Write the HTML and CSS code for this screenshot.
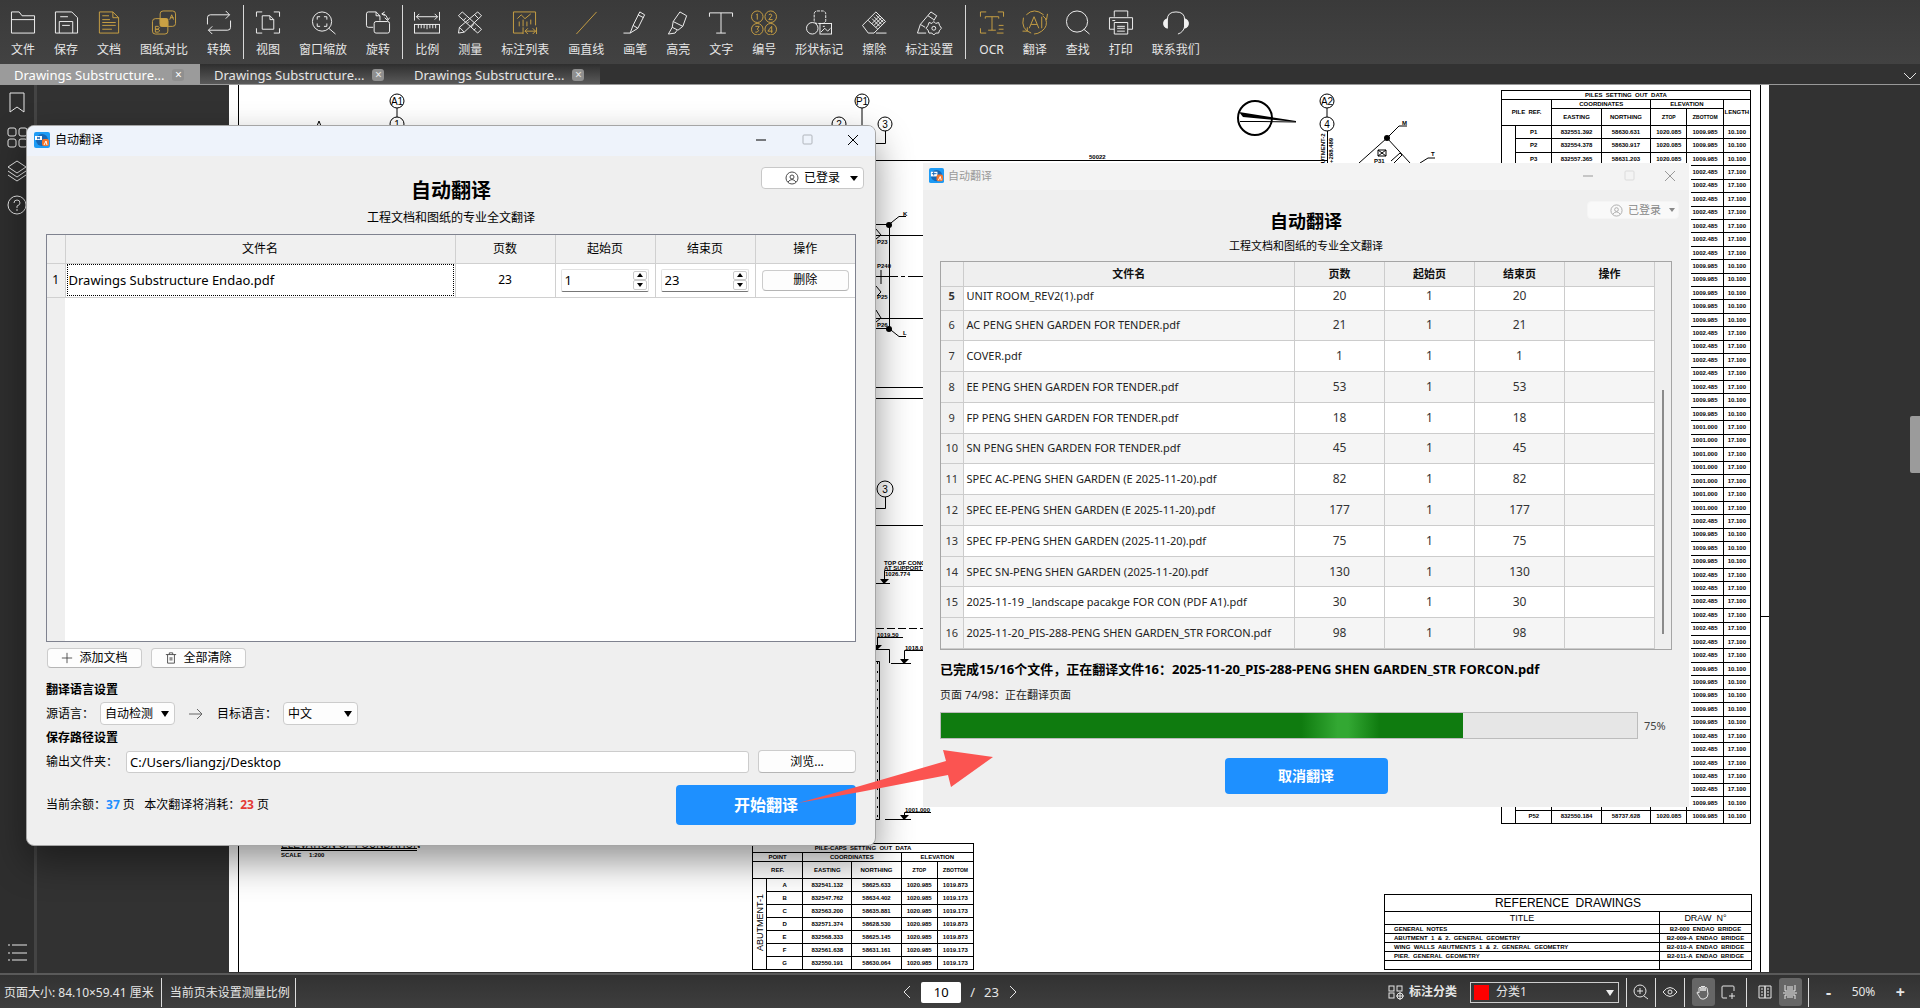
FILE: index.html
```html
<!DOCTYPE html>
<html lang="zh-CN">
<head>
<meta charset="utf-8">
<title>自动翻译</title>
<link rel="stylesheet" href="styles.css">
</head>
<body>
<header class="toolbar">
  <div class="tool-group">
    <button class="tool"><svg viewBox="0 0 28 26"><path d="M2 24V2h8l3 4h13v18zM2 10h24"/></svg><span>文件</span></button>
    <button class="tool"><svg viewBox="0 0 28 26"><path d="M3 2h17l6 6v16H3zM7 24V12h14v12M8 7h8M10 16h8"/></svg><span>保存</span></button>
    <button class="tool gold"><svg viewBox="0 0 28 26"><path d="M4 2h14l6 6v16H4zM18 2v6h6M7 6h7M7 10h8M7 13h14M7 16h14M7 20h10"/></svg><span>文档</span></button>
    <button class="tool gold"><svg viewBox="0 0 28 26"><rect x="10" y="1" width="16" height="16" rx="3"/><rect x="2" y="9" width="16" height="16" rx="3"/><rect class="solid" x="10" y="9" width="8" height="8" rx="1"/><path d="M20 10l2-5 2 5M21 8h3M5 17h3q2 1 0 3H5zM5 20h3q3 2 0 3H5z"/></svg><span>图纸对比</span></button>
    <button class="tool"><svg viewBox="0 0 28 26"><path d="M2 15V8q0-3 3-3h20M21 1l4 4-4 4M26 11v7q0 3-3 3H3M7 17l-4 4 4 4"/></svg><span>转换</span></button>
  </div>
  <div class="tool-group">
    <button class="tool"><svg viewBox="0 0 28 26"><path d="M2 7V2h6M20 2h6v5M26 19v5h-6M8 24H2v-5M8 6h8l4 4v10H8zM16 6v4h4"/></svg><span>视图</span></button>
    <button class="tool"><svg viewBox="0 0 28 26"><circle cx="13" cy="12" r="10"/><path d="M20 19l7 6M8 10V7h3M15 7h3v3M18 14v3h-3M11 17H8v-3"/></svg><span>窗口缩放</span></button>
    <button class="tool"><svg viewBox="0 0 28 26"><path d="M9 18H4q-2 0-2-2V4q0-2 2-2h8l4 4v5M12 2v4h4"/><rect x="10" y="12" width="16" height="12" rx="2"/><path d="M18 4q5 0 6 6M21 8l3 3 2-3M18 4l3-2M18 4l3 2"/></svg><span>旋转</span></button>
  </div>
  <div class="tool-group">
    <button class="tool"><svg viewBox="0 0 28 26"><path d="M1 2v9M27 2v9M3 7h22M6 4L3 7l3 3M22 4l3 3-3 3"/><rect x="1" y="15" width="26" height="9"/><path d="M5 15v4M8 15v4M11 15v4M14 15v5M17 15v4M20 15v4M23 15v4"/></svg><span>比例</span></button>
    <button class="tool"><svg viewBox="0 0 28 26"><path d="M2 6l4-4 20 18-4 4zM7 11l3-3M11 14l2-2M15 18l3-3M18 21l2-2M22 2l4 4L8 23l-6 1 1-6zM19 5l4 4M3 18l5 5"/></svg><span>测量</span></button>
    <button class="tool gold"><svg viewBox="0 0 28 26"><path d="M12 24H2V2h23v14M6 9l4-4 4 4 6-5M8 12v5M12 10v7M16 12v5M20 10v5M12 18v7M26 18v7M14 22h11M17 19l-3 3 3 3M22 19l3 3-3 3"/></svg><span>标注列表</span></button>
    <button class="tool gold"><svg viewBox="0 0 28 26"><path d="M4 25L25 2"/></svg><span>画直线</span></button>
    <button class="tool"><svg viewBox="0 0 28 26"><path d="M2 24h7l3-8 7-14 5 3-7 14-8 5M12 16l5 3M17 5l6 3"/></svg><span>画笔</span></button>
    <button class="tool"><svg viewBox="0 0 28 26"><path d="M9 12l7-10 7 4-4 11-5 4-6-3zM9 12l10 5M8 18l-4 7 7-1 2-3"/></svg><span>高亮</span></button>
    <button class="tool"><svg viewBox="0 0 28 26"><path d="M2 7V3h24v4M14 3v21M9 24h10"/></svg><span>文字</span></button>
    <button class="tool gold"><svg viewBox="0 0 28 26"><circle cx="7" cy="7" r="6"/><circle cx="21" cy="7" r="6"/><circle cx="7" cy="20" r="6"/><circle cx="21" cy="20" r="6"/><path d="M6 5l1-1v6M19 5q3-2 3 1l-3 4h4M5 17h4l-2 3q3 1 0 3H5M23 22h-5l4-5v7"/></svg><span>编号</span></button>
    <button class="tool"><svg viewBox="0 0 28 26"><rect x="9" y="1" width="12" height="13" rx="3" stroke-dasharray="3 1"/><circle cx="7" cy="19" r="6"/><rect x="15" y="14" width="12" height="11"/><path d="M16 23l4-4 3 3 3-3M18 17h2"/></svg><span>形状标记</span></button>
    <button class="tool"><svg viewBox="0 0 28 26"><path d="M2 16L16 2l10 10-12 12H8zM8 11l10 9M16 24h11M12 9l8 8M14 7l8 8M16 5l8 8M20 6l-8 8M22 8l-8 8M24 10l-8 8"/></svg><span>擦除</span></button>
    <button class="tool"><svg viewBox="0 0 28 26"><path d="M11 24H2l3-9L16 2l6 4-3 5M13 6l6 4M5 15l5 3"/><circle cx="19" cy="19" r="2"/><path d="M19 12l2 2 3-1 1 3 2 3-2 2-1 3-3 0-2 2-2-2-3 0-1-3-2-2 2-3 1-3 3 1z"/></svg><span>标注设置</span></button>
  </div>
  <div class="tool-group">
    <button class="tool gold"><svg viewBox="0 0 28 26"><path d="M2 7V2h6M20 2h6v5M8 24H2v-5M7 7h14v2M14 7v14M10 21h8M21 16h5M21 20h5M19 24h7M7 7v2"/></svg><span>OCR</span></button>
    <button class="tool gold"><svg viewBox="0 0 28 26"><path d="M5 5q8-8 18 0M2 8q-3 12 8 16M25 9q3 8-4 13-4 3-8 3M27 4l-1 6-4-4M1 22l5 0 0-4M8 19l5-12 5 12M10 15h6M21 7v12"/></svg><span>翻译</span></button>
    <button class="tool"><svg viewBox="0 0 28 26"><circle cx="13" cy="12" r="11"/><path d="M20 20l6 5"/></svg><span>查找</span></button>
    <button class="tool"><svg viewBox="0 0 28 26"><path d="M7 7V1h14v6M7 20H2V8h24v12h-5M7 13h14v12H7zM10 17h8M10 19h8M10 22h8M5 11h3"/></svg><span>打印</span></button>
    <button class="tool"><svg viewBox="0 0 28 26"><path d="M5 10q0-8 9-8t9 8v7q-1 6-7 8"/><path class="solid" d="M5 9q-4 1-4 5t4 5zM23 9q4 1 4 5t-4 5z"/></svg><span>联系我们</span></button>
  </div>
</header>

<nav class="tabs">
  <a class="tab active" href="#">Drawings Substructure... <i>×</i></a>
  <a class="tab" href="#">Drawings Substructure... <i>×</i></a>
  <a class="tab" href="#">Drawings Substructure... <i>×</i></a>
  <button class="tabs-more" aria-label="more"><svg viewBox="0 0 14 10"><path d="M1 2l6 6 6-6"/></svg></button>
</nav>

<main class="workspace">
  <aside class="rail">
    <svg viewBox="0 0 20 22"><path d="M3 1h14v19l-7-5-7 5z"/></svg>
    <svg viewBox="0 0 20 22"><rect x="1" y="2" width="8" height="8" rx="2"/><rect x="12" y="2" width="8" height="8" rx="2"/><rect x="1" y="13" width="8" height="8" rx="2"/><rect x="12" y="13" width="8" height="8" rx="2"/></svg>
    <svg viewBox="0 0 20 22"><path d="M10 1l9 6-9 6-9-6zM1 11l9 6 9-6M1 15l9 6 9-6"/></svg>
    <svg viewBox="0 0 20 22"><circle cx="10" cy="11" r="9"/><path d="M7 9q0-3 3-3t3 3q0 2-3 3v2M10 15v2"/></svg>
    <svg class="last" viewBox="0 0 20 22"><path d="M5 4h15M5 12h15M5 19h15M1 4h2M1 12h2M1 19h2"/></svg>
  </aside>
  <section class="canvas">
    <div class="sheet">
      <svg class="drawing" viewBox="229 85 1540 887">
        <g class="ln">
          <path d="M238.500 85V972M1760.500 85V972M1760 616.500h9"/>
          <circle cx="397" cy="101" r="7"/><circle cx="397" cy="124" r="7"/><path d="M397 108v9M317 126l2-5 2 5"/>
          <circle cx="862" cy="101" r="7"/><circle cx="839" cy="124" r="7"/><circle cx="885" cy="124" r="7"/><path d="M862 108v18M885.500 131v12.500H876"/>
          <path d="M876 160.500h451"/>
          <circle cx="1327" cy="101" r="7"/><circle cx="1327" cy="124" r="7"/><path d="M1327 108v9M1327.500 131v32"/>
          <path d="M1359 163l28-25 12-12h8M1387 138l23 25M1391 161l9-8 2 2-8 8M1378 150h8v6h-8zM1378 150l8 6M1386 150l-8 6M1420 163l8-5h7"/>
          <path d="M876 224.500h13l10-8h7M889.500 225v104M876 328.500h13l10 8h7M876 235.500h47M876 318.500h47M876 229l5 6-5 4M876 310l5 8-5 4M876 286l5 6-4 4M881 270v14M876 387.500h47M876 398.500h47"/>
          <path stroke-dasharray="22 3 4 3" d="M876 276.500h47"/>
          <circle cx="885" cy="489" r="8"/><path d="M885.500 497v11.500H876M876 525.500h47"/>
          <path d="M923 570.500H884.500V583M876 583.500h14M877 637.500h26M877.500 637v10M876 649.500h13.500V663M923 650.500H904.500V663M891 663.500h20M876 661.500h3.500V819.500H876M931 812.500H904.500V819M885 819.500h26M281 850.500h136M281 848.500h136"/>
          <path stroke-dasharray="8 3" d="M876 628.500h47"/>
          <path stroke-dasharray="2 7" d="M877.500 662v156"/>
        </g>
        <circle class="north" cx="1255" cy="118" r="17"/>
        <path class="ln" d="M1240 121.500h20l36 .5"/>
        <path d="M1239 112l57 9v1l-53-5z"/>
        <circle cx="1387" cy="138" r="3"/><circle cx="889" cy="225" r="3"/><circle cx="889" cy="329" r="3"/>
        <path d="M880 579h9l-5 5zM873 645h9l-5 5zM900 659h9l-5 5zM900 815h9l-5 5z"/>
        <g class="mark">
          <text x="397" y="105">A1</text><text x="397" y="128">1</text><text x="862" y="105">P1</text><text x="839" y="128">2</text><text x="885" y="128">3</text><text x="1327" y="105">A2</text><text x="1327" y="128">4</text><text x="885" y="493">3</text>
        </g>
        <g class="note">
          <text x="1089" y="159">50022</text><text x="1402" y="125">M</text><text x="1431" y="156">T</text><text x="903" y="216">K</text><text x="903" y="335">L</text><text x="1374" y="163">P31</text>
          <text x="877" y="244">P23</text><text x="877" y="268">P240</text><text x="877" y="299">P25</text><text x="877" y="327">P26</text>
          <text x="884" y="565">TOP OF CONC</text><text x="884" y="570">AT SUPPORT</text><text x="885" y="576">1026.774</text>
          <text x="877" y="637">1019.50</text><text x="905" y="650">1018.0</text><text x="905" y="812">1001.000</text>
          <text x="281" y="857">SCALE</text><text x="309" y="857">1:200</text>
          <text transform="rotate(-90 1325 172)" x="1325" y="172">ABUTMENT-2</text><text transform="rotate(-90 1333 163)" x="1333" y="163">+288.489</text>
        </g>
        <text class="caption" x="281" y="848">ELEVATION OF FOUNDATION</text>
      </svg>

      <table class="cad piles">
        <colgroup><col class="c14"><col class="c36"><col class="c49"><col class="c49"><col class="c36"><col class="c36"><col class="c27"></colgroup>
        <thead>
          <tr class="h9"><th colspan="7">PILES &nbsp;SETTING &nbsp;OUT &nbsp;DATA</th></tr>
          <tr class="h9"><th colspan="2" rowspan="2">PILE &nbsp;REF.</th><th colspan="2">COORDINATES</th><th colspan="2">ELEVATION</th><th rowspan="2">LENGTH</th></tr>
          <tr class="h17"><th>EASTING</th><th>NORTHING</th><th>Z<small>TOP</small></th><th>Z<small>BOTTOM</small></th></tr>
        </thead>
        <tbody>
          <tr><td rowspan="52"></td><td>P1</td><td>832551.392</td><td>58630.631</td><td>1020.085</td><td>1009.985</td><td>10.100</td></tr>
          <tr><td>P2</td><td>832554.378</td><td>58630.917</td><td>1020.085</td><td>1009.985</td><td>10.100</td></tr>
          <tr><td>P3</td><td>832557.365</td><td>58631.203</td><td>1020.085</td><td>1009.985</td><td>10.100</td></tr>
          <tr><td colspan="4"></td><td>1002.485</td><td>17.100</td></tr>
          <tr><td colspan="4"></td><td>1002.485</td><td>17.100</td></tr>
          <tr><td colspan="4"></td><td>1002.485</td><td>17.100</td></tr>
          <tr><td colspan="4"></td><td>1002.485</td><td>17.100</td></tr>
          <tr><td colspan="4"></td><td>1002.485</td><td>17.100</td></tr>
          <tr><td colspan="4"></td><td>1002.485</td><td>17.100</td></tr>
          <tr><td colspan="4"></td><td>1002.485</td><td>17.100</td></tr>
          <tr><td colspan="4"></td><td>1009.985</td><td>10.100</td></tr>
          <tr><td colspan="4"></td><td>1009.985</td><td>10.100</td></tr>
          <tr><td colspan="4"></td><td>1009.985</td><td>10.100</td></tr>
          <tr><td colspan="4"></td><td>1009.985</td><td>10.100</td></tr>
          <tr><td colspan="4"></td><td>1009.985</td><td>10.100</td></tr>
          <tr><td colspan="4"></td><td>1002.485</td><td>17.100</td></tr>
          <tr><td colspan="4"></td><td>1002.485</td><td>17.100</td></tr>
          <tr><td colspan="4"></td><td>1002.485</td><td>17.100</td></tr>
          <tr><td colspan="4"></td><td>1002.485</td><td>17.100</td></tr>
          <tr><td colspan="4"></td><td>1002.485</td><td>17.100</td></tr>
          <tr><td colspan="4"></td><td>1009.985</td><td>10.100</td></tr>
          <tr><td colspan="4"></td><td>1009.985</td><td>10.100</td></tr>
          <tr><td colspan="4"></td><td>1001.000</td><td>17.100</td></tr>
          <tr><td colspan="4"></td><td>1001.000</td><td>17.100</td></tr>
          <tr><td colspan="4"></td><td>1001.000</td><td>17.100</td></tr>
          <tr><td colspan="4"></td><td>1001.000</td><td>17.100</td></tr>
          <tr><td colspan="4"></td><td>1001.000</td><td>17.100</td></tr>
          <tr><td colspan="4"></td><td>1001.000</td><td>17.100</td></tr>
          <tr><td colspan="4"></td><td>1001.000</td><td>17.100</td></tr>
          <tr><td colspan="4"></td><td>1002.485</td><td>17.100</td></tr>
          <tr><td colspan="4"></td><td>1009.985</td><td>10.100</td></tr>
          <tr><td colspan="4"></td><td>1009.985</td><td>10.100</td></tr>
          <tr><td colspan="4"></td><td>1009.985</td><td>10.100</td></tr>
          <tr><td colspan="4"></td><td>1002.485</td><td>17.100</td></tr>
          <tr><td colspan="4"></td><td>1002.485</td><td>17.100</td></tr>
          <tr><td colspan="4"></td><td>1002.485</td><td>17.100</td></tr>
          <tr><td colspan="4"></td><td>1002.485</td><td>17.100</td></tr>
          <tr><td colspan="4"></td><td>1002.485</td><td>17.100</td></tr>
          <tr><td colspan="4"></td><td>1002.485</td><td>17.100</td></tr>
          <tr><td colspan="4"></td><td>1002.485</td><td>17.100</td></tr>
          <tr><td colspan="4"></td><td>1009.985</td><td>10.100</td></tr>
          <tr><td colspan="4"></td><td>1009.985</td><td>10.100</td></tr>
          <tr><td colspan="4"></td><td>1009.985</td><td>10.100</td></tr>
          <tr><td colspan="4"></td><td>1009.985</td><td>10.100</td></tr>
          <tr><td colspan="4"></td><td>1009.985</td><td>10.100</td></tr>
          <tr><td colspan="4"></td><td>1002.485</td><td>17.100</td></tr>
          <tr><td colspan="4"></td><td>1002.485</td><td>17.100</td></tr>
          <tr><td colspan="4"></td><td>1002.485</td><td>17.100</td></tr>
          <tr><td colspan="4"></td><td>1002.485</td><td>17.100</td></tr>
          <tr><td colspan="4"></td><td>1002.485</td><td>17.100</td></tr>
          <tr><td></td><td></td><td></td><td></td><td>1009.985</td><td>10.100</td></tr>
          <tr><td>P52</td><td>832550.184</td><td>58737.628</td><td>1020.085</td><td>1009.985</td><td>10.100</td></tr>
        </tbody>
      </table>

      <table class="cad caps">
        <colgroup><col class="c14"><col class="c36"><col class="c49"><col class="c49"><col class="c36"><col class="c36"></colgroup>
        <thead>
          <tr class="h9"><th colspan="6">PILE-CAPS &nbsp;SETTING &nbsp;OUT &nbsp;DATA</th></tr>
          <tr class="h9"><th colspan="2">POINT</th><th colspan="2">COORDINATES</th><th colspan="2">ELEVATION</th></tr>
          <tr class="h17"><th colspan="2">REF.</th><th>EASTING</th><th>NORTHING</th><th>Z<small>TOP</small></th><th>Z<small>BOTTOM</small></th></tr>
        </thead>
        <tbody>
          <tr><th rowspan="7" class="side"><span>ABUTMENT-1</span></th><td>A</td><td>832541.132</td><td>58625.633</td><td>1020.985</td><td>1019.873</td></tr>
          <tr><td>B</td><td>832547.762</td><td>58634.402</td><td>1020.985</td><td>1019.173</td></tr>
          <tr><td>C</td><td>832563.200</td><td>58635.881</td><td>1020.985</td><td>1019.173</td></tr>
          <tr><td>D</td><td>832571.374</td><td>58628.530</td><td>1020.985</td><td>1019.873</td></tr>
          <tr><td>E</td><td>832568.333</td><td>58625.145</td><td>1020.985</td><td>1019.873</td></tr>
          <tr><td>F</td><td>832561.638</td><td>58631.161</td><td>1020.985</td><td>1019.173</td></tr>
          <tr><td>G</td><td>832550.191</td><td>58630.064</td><td>1020.985</td><td>1019.173</td></tr>
        </tbody>
      </table>

      <table class="cad refs">
        <colgroup><col class="c275"><col class="c92"></colgroup>
        <thead>
          <tr class="h17"><th colspan="2" class="big">REFERENCE &nbsp;DRAWINGS</th></tr>
          <tr class="h13"><th class="mid">TITLE</th><th class="mid">DRAW &nbsp;N°</th></tr>
        </thead>
        <tbody>
          <tr><td>GENERAL &nbsp;NOTES</td><td>B2-000 &nbsp;ENDAO &nbsp;BRIDGE</td></tr>
          <tr><td>ABUTMENT &nbsp;1 &nbsp;&amp; &nbsp;2. &nbsp;GENERAL &nbsp;GEOMETRY</td><td>B2-009-A &nbsp;ENDAO &nbsp;BRIDGE</td></tr>
          <tr><td>WING &nbsp;WALLS &nbsp;ABUTMENTS &nbsp;1 &nbsp;&amp; &nbsp;2. &nbsp;GENERAL &nbsp;GEOMETRY</td><td>B2-010-A &nbsp;ENDAO &nbsp;BRIDGE</td></tr>
          <tr><td>PIER. &nbsp;GENERAL &nbsp;GEOMETRY</td><td>B2-011-A &nbsp;ENDAO &nbsp;BRIDGE</td></tr>
          <tr><td></td><td></td></tr>
        </tbody>
      </table>
    </div>
    <div class="scroll-thumb"></div>
  </section>

  <section class="win progress-win">
    <div class="titlebar">
      <svg class="logo" viewBox="0 0 16 16"><rect width="16" height="16" rx="2" fill="#1d9bf5"/><circle cx="8" cy="8" r="6" fill="#1767b5"/><path d="M2 4h7v5H2z" fill="#fff"/><path d="M3 6h5M5 4v4" stroke="#1767b5"/><rect x="8" y="7" width="7" height="7" rx="2" fill="#f4762d"/><path d="M10 13l2-4 1 4" stroke="#fff" fill="none"/></svg>
      <span>自动翻译</span>
      <div class="winctl"><svg viewBox="0 0 12 12"><path d="M1 6h10"/></svg><svg class="off" viewBox="0 0 12 12"><rect x="2" y="1" width="9" height="9" rx="1"/></svg><svg viewBox="0 0 12 12"><path d="M1 1l10 10M11 1L1 11"/></svg></div>
    </div>
    <div class="win-head">
      <div class="headline"><h2>自动翻译</h2><p>工程文档和图纸的专业全文翻译</p></div>
      <button class="login" disabled><svg viewBox="0 0 14 14"><circle cx="7" cy="7" r="6"/><circle cx="7" cy="6" r="2"/><path d="M3 11q4-5 8 0"/></svg>已登录<b class="caret"></b></button>
    </div>
    <div class="win-body">
      <div class="queue-frame">
        <table class="queue">
          <colgroup><col class="qn"><col><col class="qc"><col class="qc"><col class="qc"><col class="qc"></colgroup>
          <thead><tr><th></th><th>文件名</th><th>页数</th><th>起始页</th><th>结束页</th><th>操作</th></tr></thead>
          <tbody>
            <tr class="cut"><th>5</th><td>UNIT ROOM_REV2(1).pdf</td><td>20</td><td>1</td><td>20</td><td></td></tr>
            <tr><th>6</th><td>AC PENG SHEN GARDEN FOR TENDER.pdf</td><td>21</td><td>1</td><td>21</td><td></td></tr>
            <tr><th>7</th><td>COVER.pdf</td><td>1</td><td>1</td><td>1</td><td></td></tr>
            <tr><th>8</th><td>EE PENG SHEN GARDEN FOR TENDER.pdf</td><td>53</td><td>1</td><td>53</td><td></td></tr>
            <tr><th>9</th><td>FP PENG SHEN GARDEN FOR TENDER.pdf</td><td>18</td><td>1</td><td>18</td><td></td></tr>
            <tr><th>10</th><td>SN PENG SHEN GARDEN FOR TENDER.pdf</td><td>45</td><td>1</td><td>45</td><td></td></tr>
            <tr><th>11</th><td>SPEC AC-PENG SHEN GARDEN (E 2025-11-20).pdf</td><td>82</td><td>1</td><td>82</td><td></td></tr>
            <tr><th>12</th><td>SPEC EE-PENG SHEN GARDEN (E 2025-11-20).pdf</td><td>177</td><td>1</td><td>177</td><td></td></tr>
            <tr><th>13</th><td>SPEC FP-PENG SHEN GARDEN (2025-11-20).pdf</td><td>75</td><td>1</td><td>75</td><td></td></tr>
            <tr><th>14</th><td>SPEC SN-PENG SHEN GARDEN (2025-11-20).pdf</td><td>130</td><td>1</td><td>130</td><td></td></tr>
            <tr><th>15</th><td>2025-11-19 _landscape pacakge FOR CON (PDF A1).pdf</td><td>30</td><td>1</td><td>30</td><td></td></tr>
            <tr><th>16</th><td>2025-11-20_PIS-288-PENG SHEN GARDEN_STR FORCON.pdf</td><td>98</td><td>1</td><td>98</td><td></td></tr>
          </tbody>
        </table>
        <div class="queue-scroll"><i></i></div>
      </div>
      <p class="status">已完成15/16个文件，正在翻译文件16：2025-11-20_PIS-288-PENG SHEN GARDEN_STR FORCON.pdf</p>
      <label class="substatus" for="prog">页面 74/98：正在翻译页面</label>
      <div class="meter"><progress id="prog" value="75" max="100"></progress><span>75%</span></div>
      <button class="primary small">取消翻译</button>
    </div>
  </section>

  <section class="win main-win">
    <div class="titlebar">
      <svg class="logo" viewBox="0 0 16 16"><rect width="16" height="16" rx="2" fill="#1d9bf5"/><circle cx="8" cy="8" r="6" fill="#1767b5"/><path d="M1 4h7v4H1z" fill="#fff"/><path d="M3 5l3 2M6 5L3 7" stroke="#1767b5"/><rect x="8" y="7" width="7" height="7" rx="2" fill="#f4762d"/><path d="M10 13l2-4 1 4" stroke="#fff" fill="none"/></svg>
      <span>自动翻译</span>
      <div class="winctl"><svg viewBox="0 0 12 12"><path d="M1 6h10"/></svg><svg class="off" viewBox="0 0 12 12"><rect x="2" y="1" width="9" height="9" rx="1"/></svg><svg viewBox="0 0 12 12"><path d="M1 1l10 10M11 1L1 11"/></svg></div>
    </div>
    <div class="win-head">
      <div class="headline"><h1>自动翻译</h1><p>工程文档和图纸的专业全文翻译</p></div>
      <button class="login"><svg viewBox="0 0 14 14"><circle cx="7" cy="7" r="6"/><circle cx="7" cy="6" r="2"/><path d="M3 11q4-5 8 0"/></svg>已登录<b class="caret"></b></button>
    </div>
    <div class="win-body">
      <div class="files-frame">
        <table class="files">
          <colgroup><col class="fn"><col><col class="fc"><col class="fc"><col class="fc"><col class="fc"></colgroup>
          <thead><tr><th></th><th>文件名</th><th>页数</th><th>起始页</th><th>结束页</th><th>操作</th></tr></thead>
          <tbody><tr>
            <th>1</th><td class="name"><div>Drawings Substructure Endao.pdf</div></td><td>23</td>
            <td><div class="spin"><input type="number" value="1" aria-label="起始页"><span><button aria-label="+"></button><button class="down" aria-label="-"></button></span></div></td>
            <td><div class="spin"><input type="number" value="23" aria-label="结束页"><span><button aria-label="+"></button><button class="down" aria-label="-"></button></span></div></td>
            <td><button class="btn del">删除</button></td>
          </tr></tbody>
        </table>
      </div>
      <div class="row actions">
        <button class="btn"><svg viewBox="0 0 14 14"><path d="M7 1v12M1 7h12"/></svg>添加文档</button>
        <button class="btn"><svg viewBox="0 0 14 14"><path d="M1 3h12M5 3V1h4v2M3 3v10h8V3M6 6v4M8 6v4"/></svg>全部清除</button>
      </div>
      <h3>翻译语言设置</h3>
      <div class="row langs">
        <label for="src">源语言：</label>
        <select id="src"><option>自动检测</option></select>
        <svg class="to" viewBox="0 0 14 12"><path d="M0 6h13M8 1l5 5-5 5"/></svg>
        <label for="dst">目标语言：</label>
        <select id="dst"><option>中文</option></select>
      </div>
      <h3>保存路径设置</h3>
      <div class="row path">
        <label for="out">输出文件夹：</label>
        <input id="out" type="text" value="C:/Users/liangzj/Desktop">
        <button class="btn">浏览...</button>
      </div>
      <div class="footer">
        <p>当前余额：<b class="blue">37</b> 页 &nbsp; 本次翻译将消耗：<b class="red">23</b> 页</p>
        <button class="primary">开始翻译</button>
      </div>
    </div>
  </section>

  <svg class="pointer" viewBox="0 0 196 54"><path d="M0 53L62 36 148 11l-3-11 50 7-42 30-3-12-88 17z"/></svg>
</main>

<footer class="statusbar">
  <div class="info"><span>页面大小: 84.10×59.41 厘米</span><span>当前页未设置测量比例</span></div>
  <div class="pager">
    <button aria-label="prev"><svg viewBox="0 0 10 14"><path d="M8 1L2 7l6 6"/></svg></button>
    <input type="text" value="10" aria-label="page"><span>/</span><span>23</span>
    <button aria-label="next"><svg viewBox="0 0 10 14"><path d="M2 1l6 6-6 6"/></svg></button>
  </div>
  <div class="view">
    <svg viewBox="0 0 16 16"><rect x="1" y="2" width="5" height="5"/><rect x="9" y="2" width="5" height="5"/><rect x="1" y="9" width="5" height="5"/><circle cx="12" cy="12" r="3"/><path d="M12 8v8M8 12h8"/></svg>
    <label for="cat">标注分类</label>
    <div class="cat"><select id="cat"><option>分类1</option></select></div>
    <div class="cell"><button aria-label="zoom"><svg viewBox="0 0 16 16"><circle cx="7" cy="7" r="6"/><path d="M11 12l4 3M4 7h6M7 4v6"/></svg></button></div>
    <div class="cell"><button aria-label="show"><svg viewBox="0 0 16 16"><path d="M1 8q7-9 14 0-7 9-14 0z"/><circle cx="8" cy="8" r="2"/></svg></button></div>
    <div class="cell wide"><button class="on" aria-label="pan"><svg viewBox="0 0 16 16"><path d="M4 9V4q1-2 2 0v3-4q1-2 2 0v4-4q1-2 2 0v4-3q2-1 2 0l1 6q0 4-4 5H7q-2 0-3-3L2 9q0-2 2 0z"/></svg></button><button aria-label="select"><svg viewBox="0 0 16 16"><path d="M7 14H3q-1 0-1-1V3q0-1 1-1h10q1 0 1 1v4M12 9v6M9 12h6"/></svg></button></div>
    <div class="cell wide"><button aria-label="two pages"><svg viewBox="0 0 16 16"><path d="M2 2h6v12H2zM8 2h6v12H8zM4 5h2M4 8h2M4 11h2M10 5h2M10 8h2M10 11h2"/></svg></button><button class="on" aria-label="continuous"><svg viewBox="0 0 16 16"><path d="M3 1v6h10V1M1 9h14M3 15v-4h10v4M5 3h6M5 5h6M5 13h6"/></svg></button></div>
    <div class="zoom"><button>-</button><span>50%</span><button>+</button></div>
  </div>
</footer>
</body>
</html>
```
FILE: styles.css
```css
* { box-sizing: border-box; }
body {
  margin: 0;
  height: 100vh;
  display: flex;
  flex-direction: column;
  overflow: hidden;
  background: #323232;
  color: #e6e6e6;
  font: 12px/18px "Noto Sans", "Noto Sans CJK SC", sans-serif;
}
button, input, select { font: inherit; color: inherit; margin: 0; padding: 0; border: 0; background: none; }
h1, h2, h3, p { margin: 0; }
svg { display: block; fill: none; stroke: currentColor; }
table { border-collapse: collapse; table-layout: fixed; }
td, th { padding: 0; }

.toolbar { display: flex; height: 64px; padding: 5px 0; background: linear-gradient(#3a3a3a, #424242); }
.tool-group { display: flex; gap: 19px; padding: 0 12px; border-right: 1px solid #d8d8d8; }
.tool-group:first-child { padding-left: 11px; }
.tool-group:last-child { padding-left: 13px; border: 0; }
.tool { display: flex; flex-direction: column; align-items: center; justify-content: flex-start; gap: 6px; padding-top: 5px; white-space: nowrap; }
.tool svg { width: 28px; height: 26px; margin: 0 -2px; color: #f2f2f2; }
.tool.gold svg { color: #c9a044; }
.solid { fill: currentColor; }

.tabs { display: flex; height: 21px; border-bottom: 1px solid #999; background: #323232; }
.tab { display: flex; align-items: center; gap: 8px; width: 200px; padding: 2px 0 0 14px; color: #e6e6e6; text-decoration: none; font-size: 13px; background: linear-gradient(#2e2e2e, #5a5a5a); white-space: nowrap; }
.tab.active { background: #9b9b9b; color: #fff; }
.tab i { width: 12px; height: 12px; border-radius: 3px; background: #8f8f8f; font-style: normal; font-size: 12px; line-height: 11px; text-align: center; }
.tabs-more { margin-left: auto; padding: 4px 3px 0 0; }
.tabs-more svg { width: 14px; height: 10px; }

.workspace { position: relative; flex: 1; display: flex; min-height: 0; overflow: hidden; }
.rail { display: flex; flex-direction: column; align-items: center; gap: 12px; width: 37px; padding: 7px 0 10px; border-right: 3px solid #444; background: #2e2e2e; }
.rail svg { width: 20px; height: 22px; }
.rail .last { margin-top: auto; }
.canvas { position: relative; flex: 1; display: flex; padding: 0 151px 0 192px; overflow: hidden; }
.sheet { position: relative; flex: 1; background: #fff; color: #000; margin-bottom: 1px; overflow: hidden; }
.drawing { width: 1540px; height: 887px; fill: #000; stroke: none; }
.ln { fill: none; stroke: #000; }
.north { fill: none; stroke: #000; stroke-width: 2; }
.mark { font: 10px "Liberation Sans", sans-serif; text-anchor: middle; }
.note { font: bold 6px "Liberation Sans", sans-serif; }
.caption { font: 10px "Liberation Sans", sans-serif; }
.scroll-thumb { position: absolute; right: 0; top: 331px; width: 10px; height: 57px; border-radius: 2px 0 0 2px; background: #9b9b9b; }

.cad { position: absolute; font: bold 6px/7px "Liberation Sans", sans-serif; text-align: center; white-space: nowrap; }
.cad td, .cad th { border: 1px solid #000; overflow: hidden; }
.cad small { font-size: 5px; }
.piles { left: 1272px; top: 5px; width: 250px; height: 734px; }
.caps { left: 523px; top: 758px; width: 222px; }
.caps tbody tr { height: 13px; }
.refs { left: 1155px; top: 809px; width: 367px; }
.refs tbody tr { height: 9px; }
.refs td:first-child { padding-left: 9px; text-align: left; }
.cad .h9 { height: 9px; }
.cad .h13 { height: 13px; }
.cad .h17 { height: 17px; }
.cad .big { font: 12px/14px "Liberation Sans", sans-serif; }
.cad .mid { font: 9px/11px "Liberation Sans", sans-serif; }
.side span { writing-mode: vertical-rl; transform: rotate(180deg); font: 9px/12px "Liberation Sans", sans-serif; }
.c14 { width: 14px; }
.c27 { width: 27px; }
.c36 { width: 36px; }
.c49 { width: 49px; }
.c275 { width: 275px; }
.c92 { width: 92px; }

.win { position: absolute; background: #efefef; color: #000; }
.titlebar { display: flex; align-items: center; }
.winctl { display: flex; margin-left: auto; }
.winctl svg { width: 12px; height: 12px; }
.winctl .off { opacity: .25; }
.win-head { display: grid; grid-template-columns: 1fr auto 1fr; }
.headline { grid-column: 2; text-align: center; }
.login { justify-self: end; align-self: start; display: flex; align-items: center; justify-content: flex-end; border: 1px solid #c8c8c8; border-radius: 4px; background: #fff; }
.login svg { width: 14px; height: 14px; margin-right: 5px; opacity: .7; }
.caret { border: 4px solid transparent; border-top: 5px solid currentColor; border-bottom: 0; }
.primary { border-radius: 4px; background: #1e90ff; color: #fff; font-size: 16px; font-weight: 700; }

.main-win { left: 26px; top: 40px; width: 850px; border: 1px solid #a5a5a5; border-radius: 8px; box-shadow: 0 16px 36px rgba(0, 0, 0, .42); overflow: hidden; }
.main-win .titlebar { height: 30px; padding: 0 16px 2px 7px; background: #eef3fb; }
.logo { width: 16px; height: 16px; margin-right: 5px; stroke: none; }
.main-win .winctl { gap: 34px; }
.main-win .win-head { padding: 11px 11px 6px; }
.main-win .login { width: 103px; height: 22px; padding-right: 5px; }
.main-win .caret { margin-left: 10px; }
.main-win .headline { padding-top: 10px; }
.main-win h1 { font-size: 20px; line-height: 28px; }
.main-win .headline p { line-height: 20px; margin-top: 3px; }
.main-win .win-body { padding: 0 19px 20px; }
.files-frame { height: 408px; border: 1px solid #7f828f; background: linear-gradient(90deg, #efefef 18px, #fff 18px); }
.files { width: 100%; text-align: center; }
.files th, .files td { border-right: 1px solid #d0d0d0; border-bottom: 1px solid #d0d0d0; font-weight: 400; }
.files th { background: #f0f0f0; }
.files thead tr { height: 28px; }
.files tbody tr { height: 34px; }
.files tbody td { background: #fff; }
.files tr > :last-child { border-right: 0; }
.fn { width: 18px; }
.fc { width: 100px; }
.files .name div { height: 32px; margin: 0 1px; padding-left: 1px; border: 1px dotted #000; line-height: 30px; text-align: left; }
.files .name, .path input { font-size: 13px; }
.spin { display: flex; height: 23px; margin: 0 6px 0 5px; padding: 1px; border: 1px solid #e2e2e2; border-bottom: 1px solid #777; border-radius: 2px; }
.spin input { flex: 1; min-width: 0; padding-left: 2px; font-size: 13px; outline: 0; appearance: textfield; }
.spin input::-webkit-inner-spin-button { display: none; }
.spin span { display: flex; flex-direction: column; width: 14px; }
.spin button { flex: 1; display: grid; place-items: center; border: 1px solid #ccc; border-radius: 2px; }
.spin button::after { content: ""; border: 3px solid transparent; border-top: 0; border-bottom: 4px solid #000; }
.spin .down::after { transform: rotate(180deg); }
.btn { display: flex; align-items: center; justify-content: center; gap: 6px; border: 1px solid #ccc; border-bottom-color: #b5b5b5; border-radius: 4px; background: #fdfdfd; }
.btn svg { width: 12px; height: 12px; opacity: .75; }
.del { width: 87px; height: 21px; margin: 0 auto; }
.row { display: flex; align-items: center; }
.actions { gap: 9px; margin-top: 6px; padding-left: 1px; }
.actions .btn { width: 95px; height: 20px; }
h3 { font-size: 12px; line-height: 20px; }
.actions + h3 { margin-top: 12px; }
.langs, .path { height: 23px; margin: 2px 0 3px; }
.langs label { width: 54px; }
.langs .to { width: 14px; height: 12px; margin: 0 14px; color: #666; }
.langs .to + label { width: 66px; }
.langs select {
  appearance: none;
  width: 75px;
  height: 23px;
  padding-left: 4px;
  border: 1px solid #ccc;
  border-radius: 4px;
  background: #fdfdfd url("data:image/svg+xml,%3Csvg xmlns='http://www.w3.org/2000/svg' width='8' height='6'%3E%3Cpath d='M0 0h8l-4 6z'/%3E%3C/svg%3E") no-repeat right 5px center;
}
.path label { width: 80px; }
.path input { flex: 1; height: 22px; margin-right: 9px; padding-left: 3px; border: 1px solid #ccc; border-radius: 3px; background: #fff; }
.path .btn { width: 98px; height: 23px; }
.footer { display: flex; align-items: center; justify-content: space-between; margin-top: 12px; }
.footer .primary { width: 180px; height: 40px; }
.blue { color: #1e90ff; }
.red { color: #e53935; }

.progress-win { left: 923px; top: 78px; width: 768px; border-right: 2px solid #fff; font-size: 11px; }
.progress-win .titlebar { height: 27px; padding: 0 13px 2px 6px; background: #f3f3f3; color: #999; }
.progress-win .logo { width: 15px; height: 15px; margin-right: 4px; }
.progress-win .winctl { gap: 29px; }
.progress-win .win-head { padding: 11px 10px 6px; }
.progress-win .login { width: 92px; height: 18px; padding-right: 3px; border-color: #f5f5f5; background: #f9f9f9; color: #888; }
.progress-win .login svg { width: 13px; height: 13px; }
.progress-win .caret { margin-left: 8px; border-width: 4px 3px 0; }
.progress-win .headline { padding-top: 7px; }
.progress-win h2 { font-size: 18px; line-height: 26px; }
.progress-win .headline p { margin-top: 3px; line-height: 18px; }
.progress-win .win-body { padding: 0 17px 13px; }
.queue-frame { display: flex; border: 1px solid #a5a5a5; }
.queue { flex: 1; height: 387px; text-align: center; white-space: nowrap; color: #333; }
.queue th, .queue td { border-right: 1px solid #ccc; border-bottom: 1px solid #ccc; }
.queue thead tr { height: 24px; color: #111; }
.queue tbody th { font-weight: 400; background: #f1f1f1; }
.queue tbody td { background: #f5f5f5; font-size: 12px; }
.queue tbody td:nth-child(2) { padding-left: 3px; text-align: left; font-size: 11px; color: #222; }
.queue tbody tr:nth-child(odd) td { background: #fff; }
.queue tbody .cut { height: 24px; }
.queue tbody .cut td, .queue tbody .cut th { padding-bottom: 4px; background: #efefef; }
.queue tbody .cut th { font-weight: 700; }
.qn { width: 22px; }
.qc { width: 90px; }
.queue-scroll { display: flex; align-items: flex-end; justify-content: center; width: 16px; padding-bottom: 15px; }
.queue-scroll i { width: 2px; height: 244px; background: #8a8a8a; }
.status { margin-top: 9px; font-size: 13px; font-weight: 700; line-height: 20px; white-space: nowrap; }
.substatus { display: block; margin-top: 7px; color: #222; }
.meter { display: flex; align-items: center; gap: 6px; margin-top: 8px; color: #444; }
progress { appearance: none; width: 698px; height: 27px; border: 1px solid #bcbcbc; }
progress::-webkit-progress-bar { background: #e6e6e6; }
progress::-webkit-progress-value { background: linear-gradient(90deg, #0f7b0f 69%, #33a833 76%, #33a833 78%, #0f7b0f 84%); }
.primary.small { display: block; width: 163px; height: 36px; margin: 19px auto 0; font-size: 14px; }
.pointer { position: absolute; left: 798px; top: 665px; width: 196px; height: 54px; fill: #fb5451; stroke: none; }

.statusbar { display: grid; grid-template-columns: 1fr auto 1fr; align-items: center; height: 35px; padding-top: 1px; border-top: 2px solid #5a5a5a; background: linear-gradient(#323232, #3e3e3e); }
.info { display: flex; }
.info span { padding: 6px 7px 5px 4px; border-right: 1px solid #ddd; }
.info span + span { padding: 6px 5px 5px 8px; }
.pager { display: flex; align-items: center; gap: 9px; font-size: 13px; }
.pager svg { width: 10px; height: 14px; }
.pager input { width: 40px; height: 21px; border-radius: 2px; background: #fff; color: #000; text-align: center; }
.view { display: flex; align-items: center; justify-content: flex-end; }
.view svg { width: 16px; height: 16px; }
.view label { margin: 0 13px 0 5px; font-weight: 700; }
.cat { position: relative; margin-right: 7px; }
.cat select { appearance: none; width: 149px; height: 21px; padding-left: 25px; border: 1px solid #ccc; }
.cat::before { content: ""; position: absolute; left: 4px; top: 3px; width: 15px; height: 15px; background: #f00; }
.cat::after { content: ""; position: absolute; right: 5px; top: 8px; border: 4px solid transparent; border-top: 6px solid #eee; border-bottom: 0; }
.cell { display: flex; justify-content: center; align-items: center; width: 29px; height: 29px; border-left: 1px solid #ddd; }
.cell.wide { width: 62px; gap: 2px; }
.cell button { display: grid; place-items: center; width: 23px; height: 28px; border-radius: 3px; }
.cell .on { background: #666; }
.zoom { display: flex; align-items: center; justify-content: space-between; width: 112px; height: 29px; padding: 0 15px 0 17px; border-left: 1px solid #ddd; }
.zoom button { font-size: 16px; font-weight: 700; }
```
